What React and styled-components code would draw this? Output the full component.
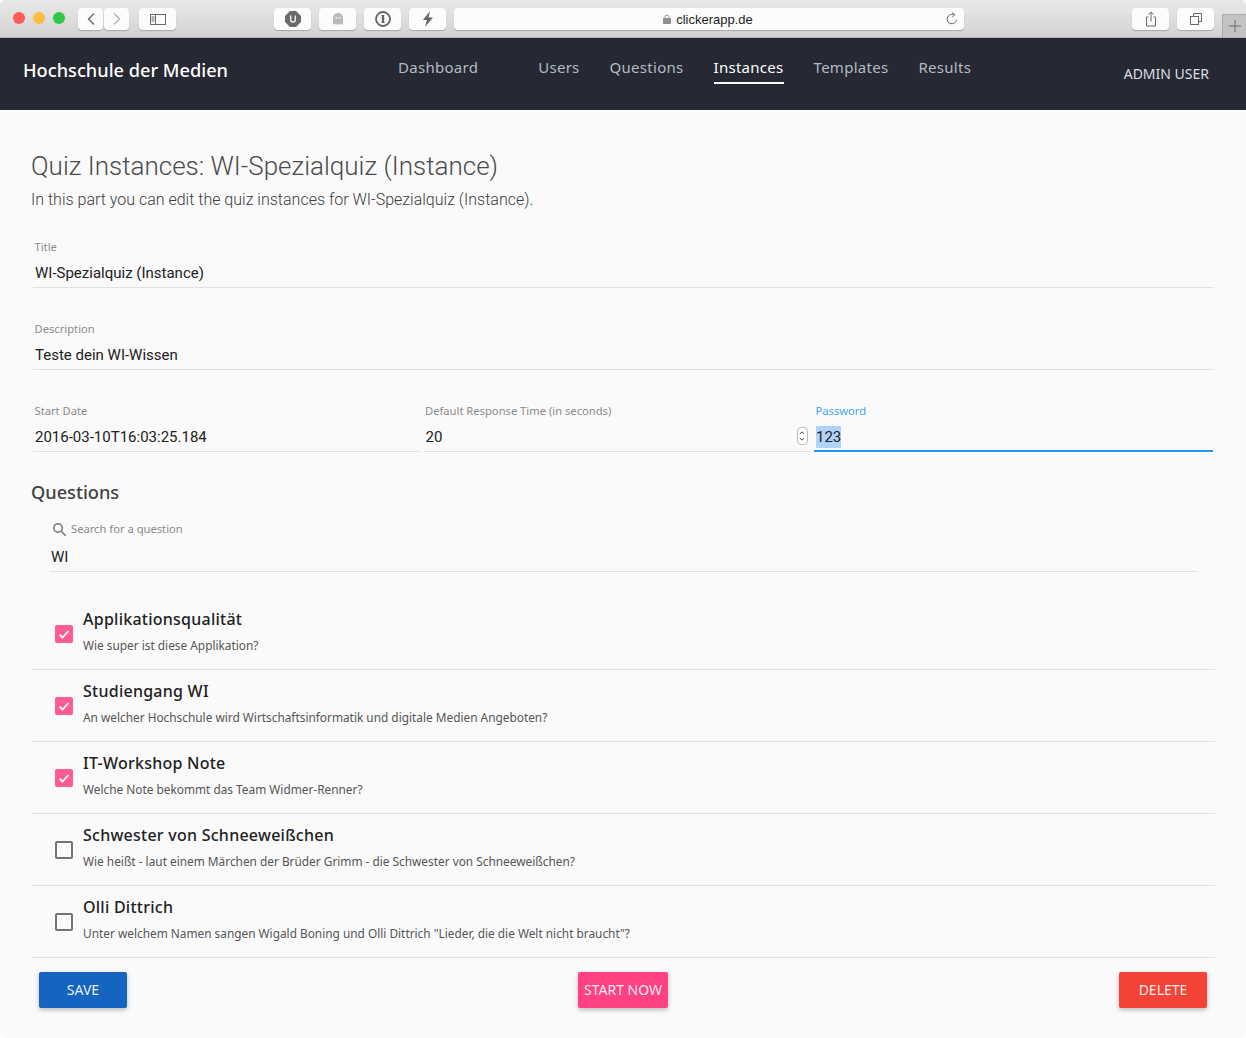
import React from "react";
import styled, { createGlobalStyle } from "styled-components";

const GlobalStyle = createGlobalStyle`
  html, body { margin: 0; padding: 0; background: #fff; }
  * { box-sizing: border-box; }
`;

const Page = styled.div`
  width: 1246px;
  height: 1038px;
  overflow: hidden;
  background: #fafafa;
  border-radius: 5px 5px 6px 6px;
`;

/* browser chrome */
const Chrome = styled.div`
  height: 38px;
  display: flex;
  align-items: flex-start;
  padding: 8px 0 0 13px;
  background: linear-gradient(#e9e9e9, #d2d2d2);
  border-bottom: 1px solid #b1b1b1;
  position: relative;
`;

const Lights = styled.div`
  display: flex;
  gap: 8px;
  margin: 4px 13px 0 0;
`;

const Light = styled.span`
  width: 12px;
  height: 12px;
  border-radius: 50%;
  background: ${p => p.$color};
`;

const ToolButton = styled.div`
  width: ${p => p.$w || 37}px;
  height: 22px;
  margin-left: ${p => p.$ml || 0}px;
  display: flex;
  align-items: center;
  justify-content: center;
  background: #fcfcfc;
  border-radius: 4px;
  box-shadow: 0 1px 1px rgba(0, 0, 0, 0.22);
  flex: none;
`;

const Address = styled.div`
  width: 510px;
  height: 22px;
  margin-left: 8px;
  padding: 0 5px 0 0;
  display: flex;
  align-items: center;
  background: #fcfcfc;
  border-radius: 4px;
  box-shadow: 0 1px 1px rgba(0, 0, 0, 0.22);
  font: 13px "Liberation Sans", sans-serif;
  color: #222;
  flex: none;
`;

const Host = styled.div`
  flex: 1;
  display: flex;
  justify-content: center;
  align-items: center;
  gap: 5px;
  padding-left: 17px;
`;

const NewTab = styled.div`
  position: absolute;
  right: 0;
  top: 14px;
  width: 24px;
  height: 23px;
  display: flex;
  align-items: center;
  justify-content: center;
  background: #c3c3c3;
  border-left: 1px solid #aaa;
  border-top: 1px solid #aaa;
`;

/* app nav */
const Nav = styled.nav`
  height: 72px;
  position: relative;
  display: flex;
  background: #262833;
  font-family: "Noto Sans", sans-serif;
`;

const Brand = styled.div`
  width: 398px;
  padding: 19px 0 0 23px;
  font-size: 18.2px;
  font-weight: 500;
  line-height: 26px;
  color: #fff;
`;

const NavLinks = styled.div`
  display: flex;
  flex: 1;
  padding-top: 18px;
`;

const NavLink = styled.a`
  height: 28px;
  margin-right: ${p => p.$gap || 30}px;
  font-size: 15px;
  line-height: 23px;
  letter-spacing: 0.28px;
  color: ${p => (p.$active ? "#fff" : "#b5bac4")};
  border-bottom: 2px solid ${p => (p.$active ? "#fff" : "transparent")};
`;

const UserName = styled.div`
  padding: 26px 37px 0 0;
  font-size: 14px;
  line-height: 20px;
  color: #dcdee3;
`;

/* content */
const Content = styled.main`
  padding: 38px 31px 0;
`;

const Title = styled.h1`
  margin: 0;
  font: 300 26px/36px Roboto, sans-serif;
  color: #4a4a4a;
`;

const Subtitle = styled.p`
  margin: 1px 0 24px;
  font: 300 16px/30px Roboto, sans-serif;
  color: #3c3c3c;
`;

const FormRow = styled.div`
  display: flex;
  gap: 4.5px;
  padding-left: 2px;
  padding-right: 2px;
  margin-bottom: 33px;
`;

const Field = styled.div`
  flex: ${p => p.$grow || 1} 1 0;
  min-width: 0;
  height: 49px;
  position: relative;
  border-bottom: ${p => (p.$focused ? "2px solid #2196f3" : "1px solid #e0e0e0")};
`;

const Label = styled.label`
  display: block;
  padding-left: 1.5px;
  font: 11.2px/16px "Noto Sans", sans-serif;
  color: ${p => (p.$focused ? "#42a5f5" : "#8a8a8a")};
`;

const Value = styled.div`
  padding: 6px 2px 0;
  font: 15px/24px Roboto, sans-serif;
  color: #212121;
`;

const Selected = styled.span`
  background: #b0d3fb;
  display: inline-block;
  line-height: 22px;
`;

const Spinner = styled.div`
  position: absolute;
  right: 2px;
  top: 24px;
  width: 11px;
  height: 18px;
  background: #fff;
  border: 1px solid #bbb;
  border-radius: 4px;
  display: flex;
  align-items: center;
  justify-content: center;
`;

const SectionTitle = styled.h2`
  margin: -6px 0 16px;
  font: 500 18.2px/26px "Noto Sans", sans-serif;
  color: #424242;
`;

const SearchField = styled.div`
  margin: 0 18px 26px 19px;
  height: 51px;
  border-bottom: 1px solid #e0e0e0;
`;

const SearchLabel = styled.div`
  display: flex;
  align-items: center;
  gap: 4px;
  padding-left: 2px;
  font: 11.2px/16px "Noto Sans", sans-serif;
  color: #8a8a8a;
`;

const SearchValue = styled.div`
  padding: 8px 1px 0;
  font: 15px/24px Roboto, sans-serif;
  color: #212121;
`;

const QuestionList = styled.ul`
  margin: 0;
  padding: 0;
  list-style: none;
`;

const QuestionItem = styled.li`
  height: 72px;
  display: flex;
  align-items: center;
  padding-left: 24px;
  border-bottom: 1px solid #e0e0e0;
  font-family: "Noto Sans", sans-serif;
`;

const Box = styled.span`
  width: 18px;
  height: 18px;
  margin-right: 10px;
  flex: none;
  display: flex;
  align-items: center;
  justify-content: center;
  border-radius: 2px;
  background: ${p => (p.$checked ? "#ff5c93" : "transparent")};
  border: ${p => (p.$checked ? "none" : "2px solid #757575")};
`;

const QuestionText = styled.div`
  display: flex;
  flex-direction: column;
  margin-bottom: 6px;
`;

const QuestionTitle = styled.div`
  font-size: 16px;
  font-weight: 500;
  line-height: 22px;
  letter-spacing: 0.25px;
  color: #212121;
`;

const QuestionHint = styled.div`
  margin-top: 6px;
  font-size: 11.85px;
  line-height: 18px;
  color: #555;
`;

const Actions = styled.div`
  display: flex;
  justify-content: space-between;
  padding: 14px 8px 0;
`;

const ActionButton = styled.button`
  width: ${p => p.$w || 88}px;
  height: 36px;
  padding: 0 0 2px;
  border: none;
  border-radius: 2px;
  background: ${p => p.$bg};
  color: rgba(255, 255, 255, 0.92);
  font: 14px "Noto Sans", sans-serif;
  box-shadow: 0 2px 5px rgba(0, 0, 0, 0.26);
`;

const Glyph = ({ w = 16, h = 16, children }) => (
  <svg width={w} height={h} viewBox={`0 0 ${w} ${h}`} fill="none" stroke="#6b6b6b" strokeWidth="1">
    {children}
  </svg>
);

const questions = [
  { title: "Applikationsqualität", hint: "Wie super ist diese Applikation?", checked: true },
  { title: "Studiengang WI", hint: "An welcher Hochschule wird Wirtschaftsinformatik und digitale Medien Angeboten?", checked: true },
  { title: "IT-Workshop Note", hint: "Welche Note bekommt das Team Widmer-Renner?", checked: true },
  { title: "Schwester von Schneeweißchen", hint: "Wie heißt - laut einem Märchen der Brüder Grimm - die Schwester von Schneeweißchen?", checked: false },
  { title: "Olli Dittrich", hint: 'Unter welchem Namen sangen Wigald Boning und Olli Dittrich "Lieder, die die Welt nicht braucht"?', checked: false },
];

export default function App() {
  return (
    <Page>
      <GlobalStyle />
      <Chrome>
        <Lights>
          <Light $color="#fc5b57" />
          <Light $color="#fdbc40" />
          <Light $color="#33c748" />
        </Lights>
        <ToolButton $w={25}>
          <Glyph w={10} h={14}><path d="M8 1.5 2.5 7 8 12.5" strokeWidth="1.4" /></Glyph>
        </ToolButton>
        <ToolButton $w={25} $ml={1}>
          <Glyph w={10} h={14}><path d="M2 1.5 7.5 7 2 12.5" stroke="#b5b5b5" strokeWidth="1.4" /></Glyph>
        </ToolButton>
        <ToolButton $ml={10}>
          <Glyph w={16} h={12}>
            <rect x="0.5" y="1.5" width="15" height="10" />
            <path d="M5.5 1.5v10M1.5 4h3M1.5 6h3M1.5 8h3" />
          </Glyph>
        </ToolButton>
        <ToolButton $ml={98}>
          <svg width="16" height="16" viewBox="0 0 16 16">
            <path d="M5 0h6l5 5v6l-5 5H5l-5-5V5z" fill="#6a6a6a" />
            <path d="M5.7 4.5v4.2a2.3 2.3 0 0 0 4.6 0V4.5" fill="none" stroke="#eee" strokeWidth="1.4" />
          </svg>
        </ToolButton>
        <ToolButton $ml={8}>
          <svg width="12" height="14" viewBox="0 0 12 14">
            <path d="M1 13V6a5 5 0 0 1 10 0v7l-2-1.4L7.400 13 6 11.600 4.600 13 3 11.600z" fill="#b9b9b9" />
            <circle cx="4.300" cy="6" r="1" fill="#eee" />
            <circle cx="7.700" cy="6" r="1" fill="#eee" />
          </svg>
        </ToolButton>
        <ToolButton $ml={8}>
          <svg width="16" height="16" viewBox="0 0 16 16">
            <circle cx="8" cy="8" r="7" fill="none" stroke="#666" strokeWidth="1.8" />
            <path d="M8 4v8" stroke="#666" strokeWidth="2.4" />
            <path d="M6.500 4.500h2M6.500 11.500h3" stroke="#666" strokeWidth="1.2" />
          </svg>
        </ToolButton>
        <ToolButton $ml={8}>
          <svg width="12" height="16" viewBox="0 0 12 16">
            <path d="M8 0 1 9h4l-2 7 8-9.500H6.500z" fill="#666" />
          </svg>
        </ToolButton>
        <Address>
          <Host>
            <svg width="8" height="10" viewBox="0 0 8 10">
              <path d="M2 4.500V3a2 2 0 0 1 4 0v1.500" fill="none" stroke="#8f8f8f" />
              <rect y="4" width="8" height="6" rx="0.500" fill="#8f8f8f" />
            </svg>
            clickerapp.de
          </Host>
          <Glyph w={14} h={14}>
            <path d="M11.500 7.500a4.700 4.700 0 1 1-3-4.800" />
            <path d="M7 0.500 10 2.600 7.300 5" strokeLinejoin="round" />
          </Glyph>
        </Address>
        <ToolButton $ml={168}>
          <Glyph w={12} h={16}>
            <path d="M3.500 6H1.500v9h9V6H8.500M6 10.500V1M3.500 3.500 6 1l2.500 2.500" />
          </Glyph>
        </ToolButton>
        <ToolButton $ml={8}>
          <Glyph w={12} h={12}>
            <rect x="0.500" y="3.500" width="8" height="8" />
            <path d="M3.500 3.500V0.500h8v8H8.500" />
          </Glyph>
        </ToolButton>
        <NewTab>
          <Glyph w={12} h={12}><path d="M6 0v12M0 6h12" stroke="#6d6d6d" /></Glyph>
        </NewTab>
      </Chrome>

      <Nav>
        <Brand>Hochschule der Medien</Brand>
        <NavLinks>
          <NavLink $gap={60}>Dashboard</NavLink>
          <NavLink>Users</NavLink>
          <NavLink>Questions</NavLink>
          <NavLink $active>Instances</NavLink>
          <NavLink>Templates</NavLink>
          <NavLink>Results</NavLink>
        </NavLinks>
        <UserName>ADMIN USER</UserName>
      </Nav>

      <Content>
        <Title>Quiz Instances: WI-Spezialquiz (Instance)</Title>
        <Subtitle>In this part you can edit the quiz instances for WI-Spezialquiz (Instance).</Subtitle>

        <FormRow>
          <Field>
            <Label>Title</Label>
            <Value>WI-Spezialquiz (Instance)</Value>
          </Field>
        </FormRow>
        <FormRow>
          <Field>
            <Label>Description</Label>
            <Value>Teste dein WI-Wissen</Value>
          </Field>
        </FormRow>
        <FormRow>
          <Field $grow={386}>
            <Label>Start Date</Label>
            <Value>2016-03-10T16:03:25.184</Value>
          </Field>
          <Field $grow={386}>
            <Label>Default Response Time (in seconds)</Label>
            <Value>20</Value>
            <Spinner>
              <svg width="6" height="12" viewBox="0 0 6 12" fill="none" stroke="#444">
                <path d="M0.800 4 3 1.800 5.200 4M0.800 8 3 10.200 5.200 8" />
              </svg>
            </Spinner>
          </Field>
          <Field $grow={399} $focused>
            <Label $focused>Password</Label>
            <Value><Selected>123</Selected></Value>
          </Field>
        </FormRow>

        <SectionTitle>Questions</SectionTitle>
        <SearchField>
          <SearchLabel>
            <svg width="15" height="15" viewBox="0 0 15 15" fill="none" stroke="#757575" strokeWidth="1.500">
              <circle cx="6" cy="6" r="4.300" />
              <path d="m9.200 9.200 4.600 4.600" />
            </svg>
            Search for a question
          </SearchLabel>
          <SearchValue>WI</SearchValue>
        </SearchField>

        <QuestionList>
          {questions.map(q => (
            <QuestionItem key={q.title}>
              <Box $checked={q.checked}>
                {q.checked && (
                  <svg width="14" height="14" viewBox="0 0 14 14" fill="none" stroke="#fff" strokeWidth="1.800">
                    <path d="m2.500 7.500 3 3 6-6.500" />
                  </svg>
                )}
              </Box>
              <QuestionText>
                <QuestionTitle>{q.title}</QuestionTitle>
                <QuestionHint>{q.hint}</QuestionHint>
              </QuestionText>
            </QuestionItem>
          ))}
        </QuestionList>

        <Actions>
          <ActionButton $bg="#1565c0">SAVE</ActionButton>
          <ActionButton $bg="#ff4081" $w={90}>START NOW</ActionButton>
          <ActionButton $bg="#f44336">DELETE</ActionButton>
        </Actions>
      </Content>
    </Page>
  );
}
